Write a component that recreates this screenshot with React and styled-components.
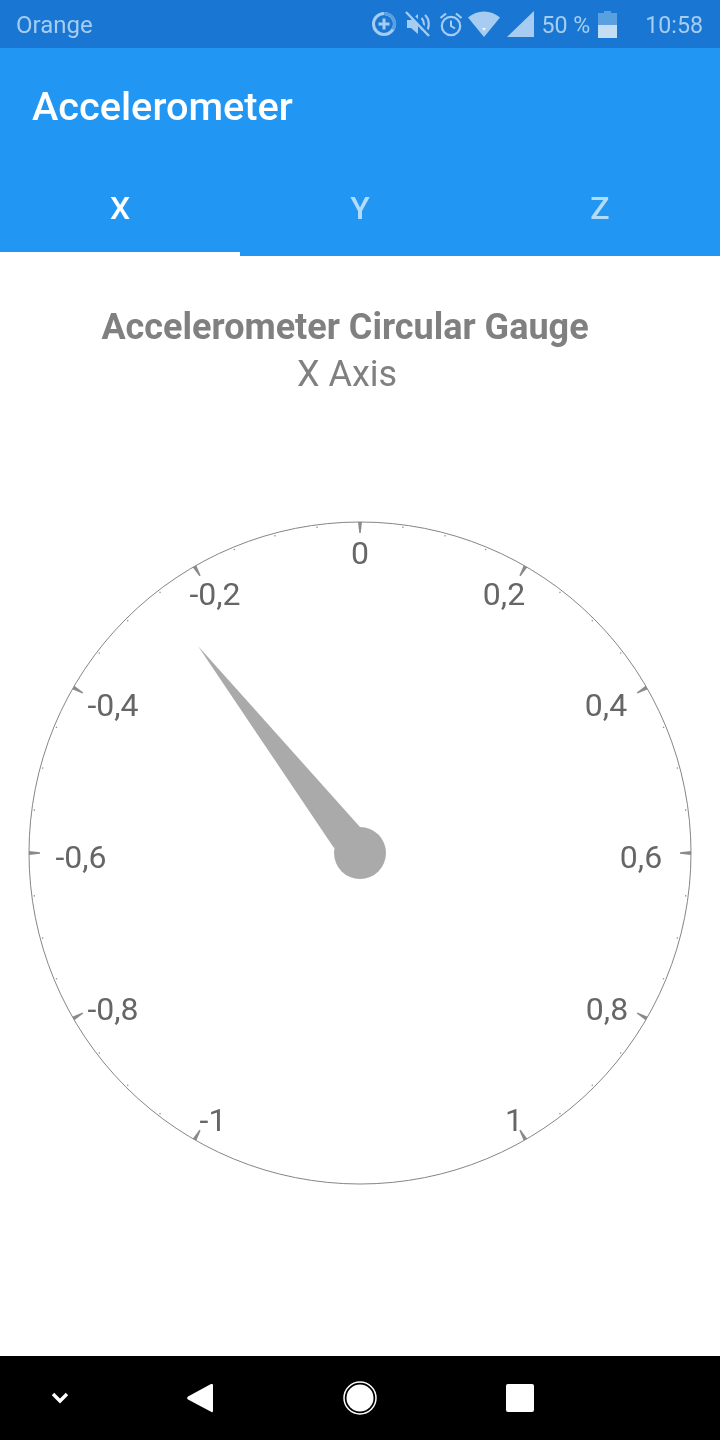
import styled, { createGlobalStyle } from 'styled-components'

const GlobalStyle = createGlobalStyle`
  html, body {
    margin: 0;
    padding: 0;
    background: #ffffff;
    font-family: Roboto, "Liberation Sans", sans-serif;
  }
`

const Screen = styled.div`
  width: 720px;
  height: 1440px;
  display: flex;
  flex-direction: column;
  overflow: hidden;
  will-change: transform;
`

const StatusBar = styled.div`
  height: 48px;
  background: #1976d2;
  color: #a6cdf1;
  display: flex;
  align-items: center;
  justify-content: space-between;
  padding: 0 17px 0 16px;
`

const Carrier = styled.span`
  font-size: 24px;
  padding-top: 2px;
`

const StatusRight = styled.div`
  display: flex;
  align-items: center;
  font-size: 23.2px;
`

const StatusSvg = styled.svg`
  display: block;
  margin-left: ${(props) => props.$gap || 0}px;
`

const BatteryText = styled.span`
  margin: 0 8px 0 7px;
  padding-top: 2px;
`

const Clock = styled.span`
  margin-left: 28px;
  padding-top: 2px;
`

const Toolbar = styled.div`
  height: 112px;
  box-sizing: border-box;
  padding: 4px 0 0 32px;
  background: #2196f3;
  display: flex;
  align-items: center;
  color: #ffffff;
  font-size: 39.7px;
  font-weight: 500;
`

const TabBar = styled.div`
  height: 96px;
  background: #2196f3;
  display: grid;
  grid-template-columns: repeat(3, 1fr);
`

const Tab = styled.div`
  position: relative;
  display: flex;
  align-items: center;
  justify-content: center;
  font-size: 32px;
  font-weight: 500;
  color: ${(props) => (props.$active ? '#ffffff' : '#b3dcfb')};
  &::after {
    content: '';
    display: ${(props) => (props.$active ? 'block' : 'none')};
    position: absolute;
    left: 0;
    right: 0;
    bottom: 0;
    height: 4px;
    background: #ffffff;
  }
`

const Content = styled.div`
  flex: 1;
  background: #ffffff;
  display: flex;
  flex-direction: column;
`

const Heading = styled.div`
  padding: 48px 30px 0 0;
  height: 142px;
  box-sizing: border-box;
  text-align: center;
  color: #808080;
  font-size: 36px;
  line-height: 47px;
`

const HeadingTitle = styled.div`
  font-weight: 700;
`

const HeadingSub = styled.div`
  padding-left: 4px;
`

const GaugeSvg = styled.svg`
  display: block;
  width: 720px;
  height: 958px;
`

const GaugeLabel = styled.text`
  font-family: Roboto, "Liberation Sans", sans-serif;
  font-size: 32px;
  fill: #666666;
  text-anchor: middle;
`

const NavBar = styled.div`
  height: 84px;
  background: #000000;
  display: grid;
  grid-template-columns: 120px 160px 160px 160px;
  align-items: center;
  justify-items: center;
`

const CX = 360
const CY = 853
const R = 331

const labels = [
  ['0', 360, 564],
  ['0,2', 504, 605],
  ['0,4', 606, 716],
  ['0,6', 641, 868],
  ['0,8', 607, 1020],
  ['1', 514, 1131],
  ['-1', 213, 1131],
  ['-0,8', 113, 1020],
  ['-0,6', 81, 868],
  ['-0,4', 113, 716],
  ['-0,2', 215, 605],
]

// the scale runs from -150deg to 150deg, nothing is marked across the bottom
const inScale = (a) => a <= 150 || a >= 210
const majorAngles = Array.from({ length: 12 }, (_, i) => i * 30).filter(inScale)
const minorAngles = Array.from({ length: 48 }, (_, i) => i * 7.5).filter(
  (a) => a % 30 !== 0 && inScale(a),
)

// the gauge is drawn in page coordinates, hence the viewBox offset
const Gauge = () => (
  <GaugeSvg viewBox="0 398 720 958">
    <circle cx={CX} cy={CY} r={R} fill="none" stroke="#777777" strokeWidth="0.9" />
    {majorAngles.map((a) => (
      <polygon
        key={a}
        points={`${CX - 2},${CY - R} ${CX + 2},${CY - R} ${CX + 0.7},${CY - R + 11} ${CX - 0.7},${CY - R + 11}`}
        fill="#8a8a8a"
        transform={`rotate(${a} ${CX} ${CY})`}
      />
    ))}
    {minorAngles.map((a) => (
      <circle
        key={a}
        cx={CX}
        cy={CY - R + 2.5}
        r="0.8"
        fill="#999999"
        transform={`rotate(${a} ${CX} ${CY})`}
      />
    ))}
    {labels.map(([text, x, y]) => (
      <GaugeLabel key={text} x={x} y={y}>
        {text}
      </GaugeLabel>
    ))}
    <polygon points="198,646 360,827 334,848" fill="#aaaaaa" />
    <circle cx={CX} cy={CY} r="26" fill="#aaaaaa" />
  </GaugeSvg>
)

const DataSaverIcon = () => (
  <StatusSvg width="26" height="26" viewBox="0 0 26 26">
    <circle cx="13" cy="13" r="10.5" fill="none" stroke="#a6cdf1" strokeWidth="3" />
    <path d="M13 2.5 A10.5 10.5 0 0 1 22 18.500" fill="none" stroke="#5a9fe0" strokeWidth="3" />
    <path d="M13 7.5v11M7.5 13h11" stroke="#a6cdf1" strokeWidth="3" />
  </StatusSvg>
)

const MuteIcon = () => (
  <StatusSvg $gap={8} width="26" height="26" viewBox="0 0 26 26">
    <path d="M2 9h4l7-6v20l-7-6H2z" fill="#a6cdf1" />
    <path d="M16.500 7c3.200 3 3.200 9 0 12M20 4c5 4.500 5 13.500 0 18" fill="none" stroke="#a6cdf1" strokeWidth="2.200" />
    <path d="M3 0l24 25" stroke="#1976d2" strokeWidth="3" />
    <path d="M1 1l23 24" stroke="#a6cdf1" strokeWidth="2.400" />
  </StatusSvg>
)

const AlarmIcon = () => (
  <StatusSvg $gap={8} width="24" height="26" viewBox="0 0 24 26">
    <circle cx="12" cy="15" r="9.200" fill="none" stroke="#a6cdf1" strokeWidth="2.200" />
    <path d="M12 9.500V15l4 2.500" fill="none" stroke="#a6cdf1" strokeWidth="2" />
    <path d="M1.500 7L7 2.500M22.500 7L17 2.500" stroke="#a6cdf1" strokeWidth="2.200" />
  </StatusSvg>
)

const WifiIcon = () => (
  <StatusSvg $gap={5} width="32" height="26" viewBox="0 0 32 26">
    <path d="M0 6.500C9-1.500 23-1.500 32 6.500L16 26z" fill="#a6cdf1" />
    <path d="M14 17h4l-2 3z" fill="#ffffff" opacity="0.8" />
  </StatusSvg>
)

const SignalIcon = () => (
  <StatusSvg $gap={7} width="27" height="26" viewBox="0 0 27 26">
    <path d="M0 26L27 0v26z" fill="#a6cdf1" />
  </StatusSvg>
)

const BatteryIcon = () => (
  <StatusSvg width="19" height="27" viewBox="0 0 19 27">
    <path d="M6 0h7v2h6v12H0V2h6z" fill="#5a9fe0" />
    <path d="M0 14h19v13H0z" fill="#c5dcf5" />
  </StatusSvg>
)

const ChevronIcon = () => (
  <svg width="18" height="12" viewBox="0 0 18 12">
    <path d="M2 2l7 7 7-7" fill="none" stroke="#ffffff" strokeWidth="3.400" />
  </svg>
)

const BackIcon = () => (
  <svg width="26" height="30" viewBox="0 0 26 30">
    <path d="M25 1a1 1 0 0 1 1 1v26a1 1 0 0 1-1.500 1L1 16.500a2 2 0 0 1 0-3L24 1z" fill="#ffffff" />
  </svg>
)

const HomeIcon = () => (
  <svg width="34" height="34" viewBox="0 0 34 34">
    <circle cx="17" cy="17" r="16" fill="none" stroke="#ffffff" strokeWidth="1.500" />
    <circle cx="17" cy="17" r="13.500" fill="#ffffff" />
  </svg>
)

const SquareIcon = styled.div`
  width: 28px;
  height: 28px;
  border-radius: 2px;
  background: #ffffff;
`

const App = () => (
  <Screen>
    <GlobalStyle />
    <StatusBar>
      <Carrier>Orange</Carrier>
      <StatusRight>
        <DataSaverIcon />
        <MuteIcon />
        <AlarmIcon />
        <WifiIcon />
        <SignalIcon />
        <BatteryText>50 %</BatteryText>
        <BatteryIcon />
        <Clock>10:58</Clock>
      </StatusRight>
    </StatusBar>
    <Toolbar>Accelerometer</Toolbar>
    <TabBar>
      <Tab $active>X</Tab>
      <Tab>Y</Tab>
      <Tab>Z</Tab>
    </TabBar>
    <Content>
      <Heading>
        <HeadingTitle>Accelerometer Circular Gauge</HeadingTitle>
        <HeadingSub>X Axis</HeadingSub>
      </Heading>
      <Gauge />
    </Content>
    <NavBar>
      <ChevronIcon />
      <BackIcon />
      <HomeIcon />
      <SquareIcon />
    </NavBar>
  </Screen>
)

export default App
